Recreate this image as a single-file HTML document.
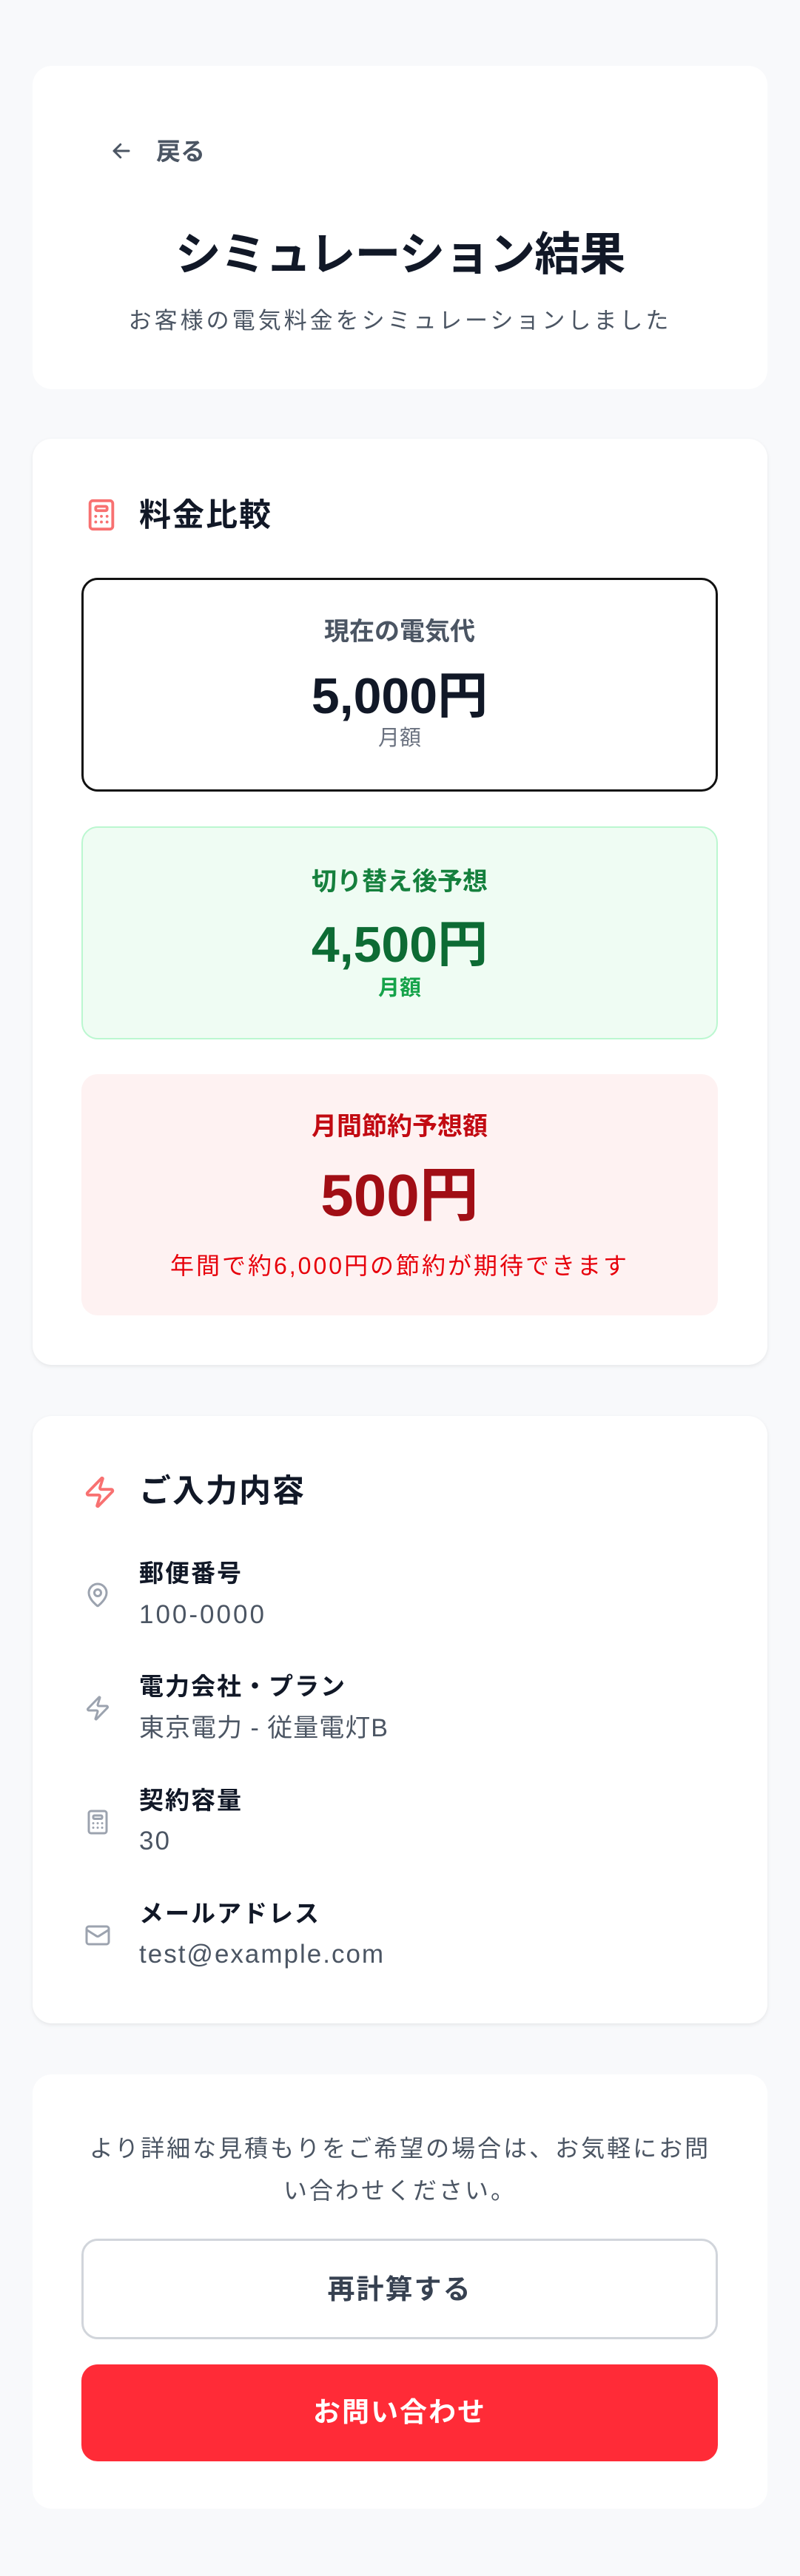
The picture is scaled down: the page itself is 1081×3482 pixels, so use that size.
<!DOCTYPE html>
<html><head><meta charset="utf-8"><style>
*{margin:0;padding:0;box-sizing:border-box}
body{width:1081px;height:3482px;background:#f8f9fb;font-family:"Liberation Sans","Noto Sans CJK JP",sans-serif;position:relative;overflow:hidden}
.card{position:absolute;left:44px;width:993px;background:#fff;border-radius:26px}
.sh{box-shadow:0 2px 6px rgba(0,0,0,0.08)}
.abs{position:absolute}
.c{position:absolute;left:0;right:0;text-align:center;white-space:nowrap}
.box{position:absolute;left:66px;width:860px;border-radius:22px}
.lbl{position:absolute;left:144px;font-size:33px;font-weight:bold;color:#111827;letter-spacing:2px;white-space:nowrap}
.val{position:absolute;left:144px;font-size:35px;color:#4b5563;white-space:nowrap}
.ico{position:absolute;left:70px}
</style></head><body>

<div class="card" style="top:89px;height:437px">
  <svg class="abs" style="left:104px;top:100px" width="32" height="30" viewBox="0 0 24 24" fill="none" stroke="#4b5563" stroke-width="2.4" stroke-linecap="round" stroke-linejoin="round"><path d="M20 12H4M11 5l-7 7 7 7"/></svg>
  <div class="abs" style="left:167px;top:94px;font-size:33px;font-weight:bold;color:#4b5563;line-height:44px">戻る</div>
  <div class="c" style="top:216px;font-size:62px;font-weight:bold;color:#111827;letter-spacing:-1px;line-height:80px">シミュレーション結果</div>
  <div class="c" style="top:323px;font-size:31px;color:#4b5563;letter-spacing:4px;line-height:44px">お客様の電気料金をシミュレーションしました</div>
</div>

<div class="card sh" style="top:593px;height:1252px">
  <svg class="abs" style="left:70px;top:80px" width="46" height="46" viewBox="0 0 24 24" fill="none" stroke="#f87171" stroke-width="2" stroke-linecap="round" stroke-linejoin="round"><rect x="4" y="2" width="16" height="20" rx="2"/><rect x="8" y="6" width="8" height="3" rx="1"/><path d="M8 13h.01M12 13h.01M16 13h.01M8 17h.01M12 17h.01M16 17h.01"/></svg>
  <div class="abs" style="left:144px;top:76px;font-size:43px;font-weight:bold;color:#111827;letter-spacing:2px;line-height:56px">料金比較</div>

  <div class="box" style="top:188px;height:289px;border:3px solid #111;background:#fff">
    <div class="c" style="top:48px;font-size:34px;font-weight:bold;color:#4b5563;line-height:44px">現在の電気代</div>
    <div class="c" style="top:117px;font-size:68px;font-weight:bold;color:#111827;line-height:80px">5,000円</div>
    <div class="c" style="top:195px;font-size:29px;color:#6b7280;line-height:38px">月額</div>
  </div>

  <div class="box" style="top:524px;height:288px;border:2px solid #bbf7d0;background:#effcf3">
    <div class="c" style="top:51px;font-size:34px;font-weight:bold;color:#15803d;line-height:44px">切り替え後予想</div>
    <div class="c" style="top:118px;font-size:68px;font-weight:bold;color:#0d6b34;line-height:80px">4,500円</div>
    <div class="c" style="top:198px;font-size:29px;font-weight:bold;color:#16a34a;line-height:38px">月額</div>
  </div>

  <div class="box" style="top:859px;height:326px;background:#fef2f2">
    <div class="c" style="top:49px;font-size:34px;font-weight:bold;color:#c20a12;line-height:44px">月間節約予想額</div>
    <div class="c" style="top:117px;font-size:80px;font-weight:bold;color:#a10e15;line-height:94px">500円</div>
    <div class="c" style="top:238px;font-size:32px;color:#e7000b;letter-spacing:3px;line-height:42px">年間で約6,000円の節約が期待できます</div>
  </div>
</div>

<div class="card sh" style="top:1914px;height:821px">
  <svg class="abs" style="left:68px;top:80px" width="46" height="46" viewBox="0 0 24 24" fill="none" stroke="#f87171" stroke-width="2" stroke-linecap="round" stroke-linejoin="round"><path d="M4 14a1 1 0 0 1-.78-1.63l9.9-10.2a.5.5 0 0 1 .86.46l-1.92 6.02A1 1 0 0 0 13 10h7a1 1 0 0 1 .78 1.63l-9.9 10.2a.5.5 0 0 1-.86-.46l1.92-6.02A1 1 0 0 0 11 14z"/></svg>
  <div class="abs" style="left:144px;top:74px;font-size:43px;font-weight:bold;color:#111827;letter-spacing:2px;line-height:56px">ご入力内容</div>

  <svg class="ico" style="top:224px" width="36" height="36" viewBox="0 0 24 24" fill="none" stroke="#9ca3af" stroke-width="2" stroke-linecap="round" stroke-linejoin="round"><path d="M20 10c0 5-5.5 10-7.4 11.6a1 1 0 0 1-1.2 0C9.5 20 4 15 4 10a8 8 0 0 1 16 0"/><circle cx="12" cy="10" r="3"/></svg>
  <div class="lbl" style="top:191px;line-height:44px">郵便番号</div>
  <div class="val" style="top:247px;line-height:44px;letter-spacing:3px">100-0000</div>

  <svg class="ico" style="top:377px" width="36" height="36" viewBox="0 0 24 24" fill="none" stroke="#9ca3af" stroke-width="2" stroke-linecap="round" stroke-linejoin="round"><path d="M4 14a1 1 0 0 1-.78-1.63l9.9-10.2a.5.5 0 0 1 .86.46l-1.92 6.02A1 1 0 0 0 13 10h7a1 1 0 0 1 .78 1.63l-9.9 10.2a.5.5 0 0 1-.86-.46l1.92-6.02A1 1 0 0 0 11 14z"/></svg>
  <div class="lbl" style="top:344px;line-height:44px">電力会社・プラン</div>
  <div class="val" style="top:400px;line-height:44px;font-size:34px;letter-spacing:1px">東京電力 - 従量電灯B</div>

  <svg class="ico" style="top:531px" width="36" height="36" viewBox="0 0 24 24" fill="none" stroke="#9ca3af" stroke-width="2" stroke-linecap="round" stroke-linejoin="round"><rect x="4" y="2" width="16" height="20" rx="2"/><rect x="8" y="6" width="8" height="3" rx="1"/><path d="M8 13h.01M12 13h.01M16 13h.01M8 17h.01M12 17h.01M16 17h.01"/></svg>
  <div class="lbl" style="top:498px;line-height:44px">契約容量</div>
  <div class="val" style="top:553px;line-height:44px;letter-spacing:2px">30</div>

  <svg class="ico" style="top:684px" width="36" height="36" viewBox="0 0 24 24" fill="none" stroke="#9ca3af" stroke-width="2" stroke-linecap="round" stroke-linejoin="round"><rect x="2" y="4" width="20" height="16" rx="2"/><path d="m22 7-8.97 5.7a1.94 1.94 0 0 1-2.06 0L2 7"/></svg>
  <div class="lbl" style="top:651px;line-height:44px">メールアドレス</div>
  <div class="val" style="top:706px;line-height:44px;letter-spacing:2px">test@example.com</div>
</div>

<div class="card" style="top:2804px;height:587px">
  <div class="c" style="top:72px;font-size:32px;color:#4b5563;line-height:57px;white-space:normal;padding:0 66px;letter-spacing:3px">より詳細な見積もりをご希望の場合は、お気軽にお問い合わせください。</div>
  <div class="box" style="top:222px;height:136px;border:3px solid #d1d5db;background:#fff;border-radius:22px">
    <div class="c" style="top:42px;font-size:37px;font-weight:bold;color:#374151;letter-spacing:2px;line-height:48px">再計算する</div>
  </div>
  <div class="box" style="top:392px;height:131px;background:#ff2b37;border-radius:22px">
    <div class="c" style="top:41px;font-size:37px;font-weight:bold;color:#fff;letter-spacing:2px;line-height:48px">お問い合わせ</div>
  </div>
</div>

</body></html>
